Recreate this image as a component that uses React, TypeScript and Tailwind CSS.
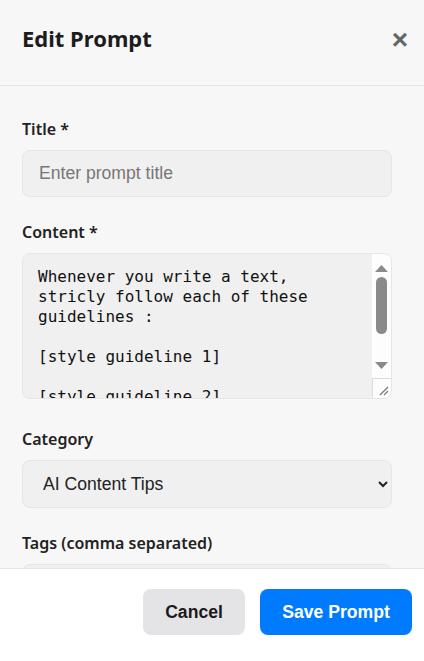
import React from 'react';

const CONTENT = `Whenever you write a text, stricly follow each of these guidelines :

[style guideline 1]

[style guideline 2]

[style guideline 3]

[style guideline 4]`;

const labelClass = "block mb-[9px] text-[16px] font-semibold text-[#222] font-['Noto_Sans',sans-serif]";
const fieldClass =
  "w-full rounded-lg border border-[#e6e6e6] bg-[#f0f0f0] px-4 text-[17.6px] text-[#222] font-['Liberation_Sans',Arial,sans-serif] outline-none";

const FakeScrollbar = () => (
  <div className="w-[19px] shrink-0 flex flex-col bg-[#fdfdfd]">
    <div className="h-[23px] flex items-end justify-center pb-[5px]">
      <svg width="13" height="7" viewBox="0 0 13 7">
        <path d="M6.5 0 L13 7 L0 7 Z" fill="#8a8a8a" />
      </svg>
    </div>
    <div className="h-[57px] mx-auto w-[11px] rounded-full bg-[#8a8a8a]" />
    <div className="flex-1 flex items-end justify-center pb-[9px]">
      <svg width="13" height="7" viewBox="0 0 13 7">
        <path d="M0 0 L13 0 L6.5 7 Z" fill="#8a8a8a" />
      </svg>
    </div>
    <div className="h-[20px] border-t border-l border-[#dcdcdc] flex items-end justify-end pr-[2px] pb-[2px]">
      <svg width="10" height="10" viewBox="0 0 10 10">
        <path d="M9 1 L1 9 M9 5 L5 9" stroke="#777" strokeWidth="1.2" />
      </svg>
    </div>
  </div>
);

export default function App() {
  return (
    <div className="w-[424px] h-[661px] flex flex-col bg-[#f7f7f7] overflow-hidden">
      <div className="h-[86px] shrink-0 flex items-center justify-between pl-[22px] pr-[16px] border-b border-[#e5e5e5]">
        <h2 className="text-[22px] font-bold text-[#1c1c1c] font-['Noto_Sans',sans-serif] -mt-[8px]">Edit Prompt</h2>
        <button className="text-[28px] leading-none font-bold text-[#666] font-['Liberation_Sans',Arial,sans-serif] -mt-[6px]">
          ×
        </button>
      </div>

      <div className="flex-1 overflow-hidden pl-[22px] pr-[32px] pt-[31px]">
        <div className="mb-[23px]">
          <label className={labelClass}>Title *</label>
          <input className={fieldClass + " h-[47px] placeholder:text-[#777]"} placeholder="Enter prompt title" />
        </div>

        <div className="mb-[28px]">
          <label className={labelClass}>Content *</label>
          <div className="flex h-[146px] rounded-lg border border-[#e6e6e6] bg-[#f0f0f0] overflow-hidden">
            <textarea
              className="flex-1 min-w-0 h-full resize-none overflow-hidden bg-transparent pl-[15px] pr-[16px] pt-[13px] text-[16px] leading-[20px] text-[#111] font-['DejaVu_Sans_Mono',monospace] outline-none"
              defaultValue={CONTENT}
            />
            <FakeScrollbar />
          </div>
        </div>

        <div className="mb-[23px]">
          <label className={labelClass}>Category</label>
          <select className={fieldClass + " h-[48px] pl-[16px] pr-[8px]"} defaultValue="ai">
            <option value="ai">AI Content Tips</option>
            <option value="writing">Writing</option>
          </select>
        </div>

        <div>
          <label className={labelClass}>Tags (comma separated)</label>
          <input className={fieldClass + " h-[47px]"} />
        </div>
      </div>

      <div className="h-[93px] shrink-0 bg-white border-t border-[#e5e5e5] flex items-center justify-end gap-[15px] pr-[12px] pb-[6px]">
        <button className="h-[46px] w-[102px] rounded-lg bg-[#e4e4e7] text-[17.6px] font-bold text-[#1a1a1a] font-['Liberation_Sans',Arial,sans-serif]">
          Cancel
        </button>
        <button className="h-[46px] w-[152px] rounded-lg bg-[#007bff] text-[17.6px] font-bold text-white font-['Liberation_Sans',Arial,sans-serif]">
          Save Prompt
        </button>
      </div>
    </div>
  );
}
